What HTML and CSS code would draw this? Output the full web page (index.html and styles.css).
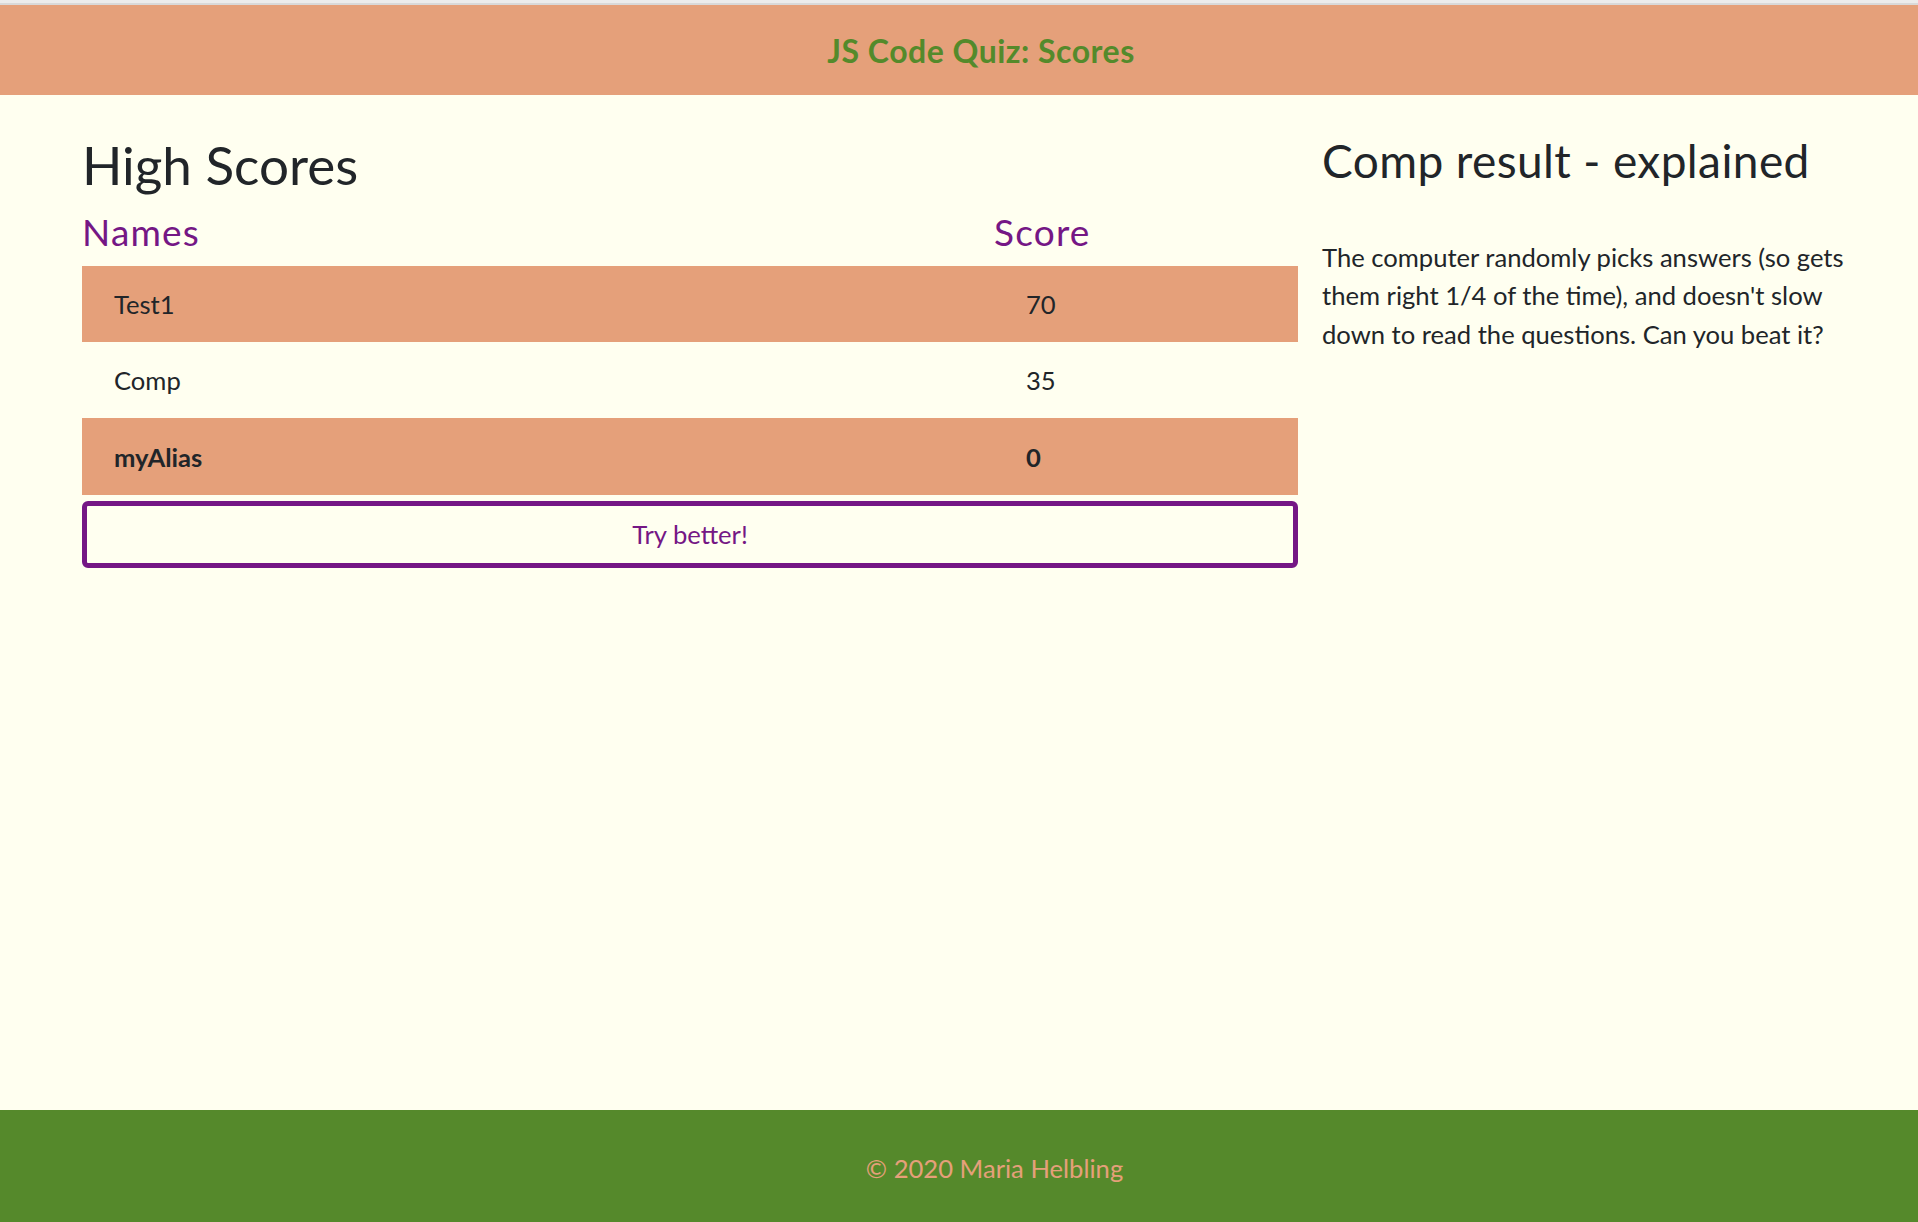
FILE: index.html
```html
<!DOCTYPE html>
<html lang="en">
<head>
<meta charset="utf-8">
<title>JS Code Quiz: Scores</title>
<link rel="stylesheet" href="styles.css">
</head>
<body>
<div class="topstrip"></div>
<header class="site-header">
  <h1 class="site-title">JS Code Quiz: Scores</h1>
</header>
<main class="content">
  <section class="scores">
    <h1 class="scores-title">High Scores</h1>
    <div class="col-heads">
      <h2 class="col-head">Names</h2>
      <h2 class="col-head">Score</h2>
    </div>
    <div class="table">
      <div class="row odd"><span class="cell">Test1</span><span class="cell">70</span></div>
      <div class="row"><span class="cell">Comp</span><span class="cell">35</span></div>
      <div class="row odd current"><span class="cell">myAlias</span><span class="cell">0</span></div>
    </div>
    <button class="try-btn" type="button">Try better!</button>
  </section>
  <aside class="explain">
    <h2 class="explain-title">Comp result - explained</h2>
    <p class="explain-text">The computer randomly picks answers (so gets them right 1/4 of the time), and doesn't slow down to read the questions. Can you beat it?</p>
  </aside>
</main>
<footer class="site-footer">
  <p class="copy">© 2020 Maria Helbling</p>
</footer>
</body>
</html>
```
FILE: styles.css
```css
* { box-sizing: border-box; }
html, body { margin: 0; padding: 0; }
body {
  min-height: 100vh;
  display: flex;
  flex-direction: column;
  background: #fffff0;
  color: #212529;
  font-family: Lato, "Open Sans", sans-serif;
  font-size: 25.6px;
  line-height: 38.4px;
}
.topstrip {
  height: 5px;
  background: #ececec;
  border-bottom: 2px solid #d9d9d9;
}
.site-header {
  height: 90px;
  background: #e5a07a;
  display: flex;
  align-items: center;
  justify-content: center;
  padding-left: 44px;
  padding-top: 2px;
}
.site-title {
  margin: 0;
  font-size: 32px;
  line-height: 38px;
  letter-spacing: 0.5px;
  font-weight: 700;
  color: #548a2b;
}
.content {
  flex: 1;
  display: grid;
  grid-template-columns: 1216px 1fr;
  column-gap: 24px;
  padding: 0 30px 0 82px;
  align-items: start;
}
.scores { padding-top: 38px; }
.scores-title {
  margin: 0 0 13px;
  font-size: 53px;
  line-height: 1.2;
  font-weight: 400;
}
.col-heads {
  display: grid;
  grid-template-columns: 3fr 1fr;
  margin-bottom: 13px;
}
.col-head {
  margin: 0;
  font-size: 37px;
  line-height: 43px;
  letter-spacing: 1.2px;
  font-weight: 400;
  color: #751785;
}
.table { display: flex; flex-direction: column; }
.row {
  display: grid;
  grid-template-columns: 3fr 1fr;
  height: 76.4px;
  align-items: center;
  padding-top: 1px;
}
.row.odd { background: #e5a07a; }
.row.current { font-weight: 700; }
.cell { padding-left: 32px; }
.try-btn {
  display: block;
  width: 100%;
  margin-top: 6px;
  height: 67px;
  border: 5px solid #751785;
  border-radius: 6px;
  background: transparent;
  color: #751785;
  font-family: inherit;
  font-size: 25.6px;
  line-height: 38.4px;
}
.explain { padding-top: 38px; }
.explain-title {
  margin: 0 0 50px;
  font-size: 46px;
  line-height: 55px;
  letter-spacing: 0.4px;
  font-weight: 400;
}
.explain-text { margin: 0; }
.site-footer {
  height: 112px;
  background: #55892b;
  display: flex;
  align-items: center;
  justify-content: center;
  padding-left: 71px;
  padding-top: 4px;
}
.copy {
  margin: 0;
  color: #e5a07a;
  font-size: 25.6px;
}
```
